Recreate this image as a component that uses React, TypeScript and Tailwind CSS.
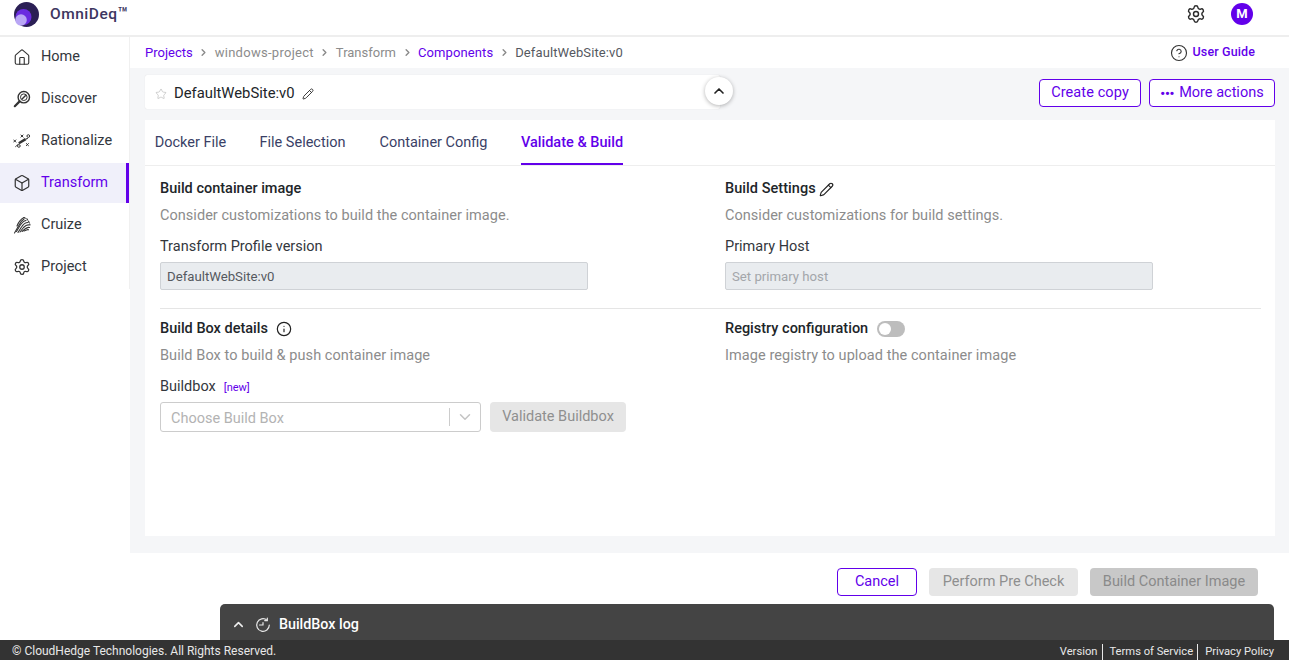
import { Box, ChevronDown, ChevronRight, ChevronUp, CircleHelp, House, Info, Pencil, Settings, Star } from "lucide-react";
import type { ReactNode } from "react";

const F = "[font-family:Roboto,'Noto_Sans',sans-serif]";

function Logo() {
  return (
    <svg width="25" height="25" viewBox="0 0 25 25" className="shrink-0">
      <circle cx="12.500" cy="12.500" r="12.500" fill="#2b1f55" />
      <circle cx="9.500" cy="15" r="8" fill="#6a2be0" />
      <circle cx="7" cy="18" r="5.800" fill="#b9a6f5" />
    </svg>
  );
}

function DiscoverIcon() {
  return (
    <svg width="18" height="18" viewBox="0 0 18 18" fill="none" stroke="#333" strokeWidth="1.400">
      <circle cx="10.800" cy="7.200" r="5.700" />
      <circle cx="10.800" cy="7.200" r="3.300" strokeWidth="1" />
      <path d="M8.800 9.200l4-4" strokeWidth="1.400" />
      <path d="M6.600 11.400L1.800 16.200" strokeWidth="2.200" strokeLinecap="round" />
    </svg>
  );
}

function RationalizeIcon() {
  return (
    <svg width="20" height="18" viewBox="0 0 20 18" fill="none" stroke="#333" strokeWidth="1.100">
      <path d="M0.500 7.500l3 3M3.500 7.500l-3 3" />
      <path d="M8.500 2l3 3M11.500 2l-3 3" />
      <path d="M14.500 11.500l3 3M17.500 11.500l-3 3" />
      <circle cx="17" cy="3.500" r="1.500" />
      <circle cx="6.500" cy="14.500" r="1.500" />
      <path d="M2.500 15.500L6 12.500" strokeWidth="1" />
      <path d="M6.500 11.500L14 7" strokeWidth="2.800" stroke="#333" />
      <path d="M14 7l2.500-1" strokeWidth="1.200" />
    </svg>
  );
}

function CruizeIcon() {
  return (
    <svg width="18" height="18" viewBox="0 0 18 18" fill="none" stroke="#333" strokeWidth="1.100" strokeLinecap="round">
      <path d="M1.500 17L5.500 10C6.500 7.500 8.500 4.500 11 3" />
      <path d="M3.500 15.500L7 9.500C8.500 7 10.500 5 13 4.500" />
      <path d="M5 16.500L8.500 11C10 8.500 12.500 6.500 15 6.500" />
      <path d="M7 16L10.500 11.500C12 10 14 8.500 16 9" />
      <path d="M9 15.500L12 13C13.500 11.800 15 11 16.500 11.500" />
      <path d="M11 15L13.500 14C14.500 13.500 15 13.500 15.500 13.800" />
      <path d="M4 10C5.500 6 8 3 11 1.500" />
      <path d="M11 1.500L14 3L16 6L17 9" strokeDasharray="1.500 1.500" />
    </svg>
  );
}

function LogIcon() {
  return (
    <svg width="16" height="16" viewBox="0 0 16 16" fill="none" stroke="#e8e8e8" strokeWidth="1.200" strokeLinecap="round">
      <path d="M14.300 8A6.300 6.300 0 1 1 12 3.100" />
      <path d="M12.300 1v2.600H9.700" />
      <path d="M4.500 8h3.500V5.500" />
    </svg>
  );
}

function NavItem({ icon, label, active }: { icon: ReactNode; label: string; active?: boolean }) {
  return (
    <div className={active ? "flex h-10 items-center gap-[10px] border-r-[3px] border-[#6200ea] bg-[#f0f0fa] pl-[13px] text-[#6200ea]" : "flex h-10 items-center gap-[10px] pl-[13px] text-[#33373d]"}>
      <span className="flex w-[18px] justify-center text-[#333333]">{icon}</span>
      <span className="text-[14.500px]">{label}</span>
    </div>
  );
}

function Sep() {
  return <ChevronRight size={11} strokeWidth={3} className="mx-[5.500px] text-[#8a8a8a]" />;
}

export default function App() {
  return (
    <div className={`${F} relative flex h-[660px] w-[1289px] flex-col overflow-hidden bg-white text-[14.500px] text-[#212529]`}>
      <header className="flex h-[37px] shrink-0 items-center border-b-2 border-[#eeeeee] pb-[7px] pl-[14px] pr-[36px]">
        <Logo />
        <span className="ml-[11px] text-[15.500px] font-medium tracking-[0.5px] text-[#3d3660]">OmniDeq<span className="text-[17px]">™</span></span>
        <div className="ml-auto flex items-center gap-[25px]">
          <Settings size={20} strokeWidth={1.700} className="text-[#2b2b2b]" />
          <span className="flex h-[22px] w-[22px] items-center justify-center rounded-full bg-[#6200ea] text-[13px] font-bold text-white">M</span>
        </div>
      </header>

      <div className="flex min-h-0 flex-1">
        <aside className="w-[130px] shrink-0">
          <nav className="flex h-[252px] flex-col gap-[2px] border-r border-[#f0f0f0]">
            <NavItem icon={<House size={19} strokeWidth={1.500} />} label="Home" />
            <NavItem icon={<DiscoverIcon />} label="Discover" />
            <NavItem icon={<RationalizeIcon />} label="Rationalize" />
            <NavItem icon={<Box size={18} strokeWidth={1.600} />} label="Transform" active />
            <NavItem icon={<CruizeIcon />} label="Cruize" />
            <NavItem icon={<Settings size={18} strokeWidth={1.700} />} label="Project" />
          </nav>
        </aside>

        <main className="flex min-w-0 flex-1 flex-col">
          <div className="flex h-[31px] shrink-0 items-center pl-[15px] pr-[34px] text-[13px]">
            <span className="text-[#6200ea]">Projects</span>
            <Sep />
            <span className="tracking-[0.28px] text-[#8c8c8c]">windows-project</span>
            <Sep />
            <span className="text-[#8c8c8c]">Transform</span>
            <Sep />
            <span className="tracking-[0.1px] text-[#6200ea]">Components</span>
            <Sep />
            <span className="tracking-[0.1px] text-[#55595f]">DefaultWebSite:v0</span>
            <div className="ml-auto flex items-center gap-[5px] text-[12.500px] font-medium text-[#6200ea]">
              <CircleHelp size={18} strokeWidth={1.500} className="-ml-[1px] text-[#333]" />
              <span className="tracking-[0.12px]">User Guide</span>
            </div>
          </div>

          <div className="flex h-[485px] shrink-0 flex-col bg-[#f5f6f8] pb-[17px] pl-[15px] pr-[14px] pt-[7px]">
            <div className="flex h-[45px] shrink-0 items-start justify-between">
              <div className="relative flex h-[34px] w-[575px] items-center rounded-[2px] bg-white pl-[10px] pt-[3px] shadow-[0_0_1px_rgba(0,0,0,0.15)]">
                <Star size={12} strokeWidth={1.100} className="mt-[1px] text-[#aaaaaa]" />
                <span className="ml-[7px] text-[14.800px] text-[#212529]">DefaultWebSite:v0</span>
                <Pencil size={12} strokeWidth={1.900} className="ml-[7px] text-[#333]" />
                <span className="absolute right-[-13px] top-[2px] flex h-[28px] w-[28px] items-center justify-center rounded-full bg-white shadow-[0_1px_4px_rgba(0,0,0,0.3)]">
                  <ChevronUp size={16} strokeWidth={2.500} className="text-[#222]" />
                </span>
              </div>
              <div className="flex gap-2 pt-[4px]">
                <button className="h-[28px] w-[102px] rounded-[4px] border border-[#6200ea] bg-white text-[14.500px] tracking-[0.1px] text-[#6200ea]">Create copy</button>
                <button className="flex h-[28px] w-[126px] items-center justify-center gap-[5px] rounded-[4px] border border-[#6200ea] bg-white text-[14.500px] text-[#6200ea]">
                  <span className="text-[13px] font-black leading-none tracking-[-0.2px]">•••</span>
                  More actions
                </button>
              </div>
            </div>

            <section className="flex min-h-0 flex-1 flex-col bg-white">
              <div className="flex h-[46px] shrink-0 gap-[33px] border-b border-[#eeeeee] px-[10px] text-[#3a3f66]">
                <span className="flex w-[71px] items-center justify-center whitespace-nowrap">Docker File</span>
                <span className="flex w-[87px] items-center justify-center whitespace-nowrap">File Selection</span>
                <span className="flex w-[109px] items-center justify-center whitespace-nowrap">Container Config</span>
                <span className="flex w-[102px] items-center justify-center whitespace-nowrap border-y-2 border-t-transparent border-b-[#6200ea] font-medium text-[#6200ea]">Validate &amp; Build</span>
              </div>

              <div className="pl-[15px] pr-[14px]">
                <div className="grid h-[143px] grid-cols-[565px_1fr] border-b border-[#e5e5e5]">
                  <div>
                    <h3 className="mt-[13px] h-[20px] font-medium leading-5 text-[#212529]">Build container image</h3>
                    <p className="mt-[7px] leading-5 tracking-[0.04px] text-[#8c8c8c]">Consider customizations to build the container image.</p>
                    <p className="mt-[11px] leading-5 text-[#33373d]">Transform Profile version</p>
                    <div className="mt-[5px] flex h-[28px] w-[428px] items-center rounded-[2px] border border-[#cfd2d6] bg-[#e9ecef] pl-[6px] pt-[2px] text-[13.200px] text-[#55595f]">DefaultWebSite:v0</div>
                  </div>
                  <div>
                    <h3 className="mt-[13px] flex h-[20px] items-center gap-[3px] font-medium leading-5 tracking-[0.05px] text-[#212529]">Build Settings <Pencil size={15} strokeWidth={1.800} className="text-[#222]" /></h3>
                    <p className="mt-[7px] leading-5 tracking-[0.04px] text-[#8c8c8c]">Consider customizations for build settings.</p>
                    <p className="mt-[11px] leading-5 text-[#33373d]">Primary Host</p>
                    <div className="mt-[5px] flex h-[28px] w-[428px] items-center rounded-[2px] border border-[#cfd2d6] bg-[#e9ecef] pl-[6px] pt-[2px] text-[13.200px] text-[#a3a6aa]">Set primary host</div>
                  </div>
                </div>

                <div className="grid grid-cols-[565px_1fr]">
                  <div>
                    <h3 className="mt-[10px] flex h-[20px] items-center gap-[8px] font-medium leading-5 text-[#212529]">Build Box details <Info size={16} strokeWidth={1.800} className="text-[#222]" /></h3>
                    <p className="mt-[7px] leading-5 tracking-[0.07px] text-[#8c8c8c]">Build Box to build &amp; push container image</p>
                    <p className="mt-[11px] flex items-baseline gap-[8px] leading-5 text-[#33373d]">Buildbox <span className="text-[11px] text-[#6200ea]">[new]</span></p>
                    <div className="mt-[4px] flex items-center gap-[9px]">
                      <div className="flex h-[30px] w-[321px] items-center rounded-[3px] border border-[#cccccc] bg-white pl-[10px] text-[#b3b3b3]">
                        <span className="pt-[4px]">Choose Build Box</span>
                        <span className="ml-auto h-[18px] w-px bg-[#cccccc]" />
                        <ChevronDown size={18} strokeWidth={2} className="mx-[6px] text-[#c4c4c4]" />
                      </div>
                      <button className="h-[30px] w-[136px] rounded-[4px] bg-[#e6e6e6] text-[#8f8f8f]">Validate Buildbox</button>
                    </div>
                  </div>
                  <div>
                    <h3 className="mt-[10px] flex h-[20px] items-center gap-[9px] font-medium leading-5 text-[#212529]">
                      Registry configuration
                      <span className="flex h-[16px] w-[28px] items-center rounded-full bg-[#bdbdbd] pl-[2px]"><span className="h-[12px] w-[12px] rounded-full bg-white" /></span>
                    </h3>
                    <p className="mt-[7px] leading-5 tracking-[0.07px] text-[#8c8c8c]">Image registry to upload the container image</p>
                  </div>
                </div>
              </div>
            </section>
          </div>

          <div className="flex flex-1 items-start justify-end gap-3 pr-[31px] pt-[15px]">
            <button className="h-[28px] w-[80px] rounded-[4px] border border-[#6200ea] bg-white text-[#6200ea]">Cancel</button>
            <button className="h-[28px] w-[149px] rounded-[4px] bg-[#e6e6e6] text-[#8f8f8f]">Perform Pre Check</button>
            <button className="h-[28px] w-[168px] rounded-[4px] bg-[#c8c8c8] text-[#8a8a8a]">Build Container Image</button>
          </div>
        </main>
      </div>

      <div className="absolute bottom-[20px] left-[220px] flex h-[36px] w-[1054px] items-center rounded-t-[5px] bg-[#444444] pl-[11px] pt-[5px] text-white">
        <ChevronUp size={15} strokeWidth={2.500} className="text-[#eeeeee]" />
        <span className="ml-[9px]"><LogIcon /></span>
        <span className="ml-[8px] text-[14.300px] font-medium">BuildBox log</span>
      </div>

      <footer className="z-10 flex h-[20px] shrink-0 items-center bg-[#333333] pl-[12px] pr-[15px] text-[12px] text-[#e8e8e8]">
        <span className="pt-[2px]">© CloudHedge Technologies. All Rights Reserved.</span>
        <div className="ml-auto flex h-full items-end text-[11.200px]">
          <span className="flex h-[16px] items-center pr-[5px]">Version</span>
          <span className="flex h-[16px] items-center border-l border-[#e8e8e8] pl-[6px] pr-[4px]">Terms of Service</span>
          <span className="flex h-[16px] items-center border-l border-[#e8e8e8] pl-[7px]">Privacy Policy</span>
        </div>
      </footer>
    </div>
  );
}
